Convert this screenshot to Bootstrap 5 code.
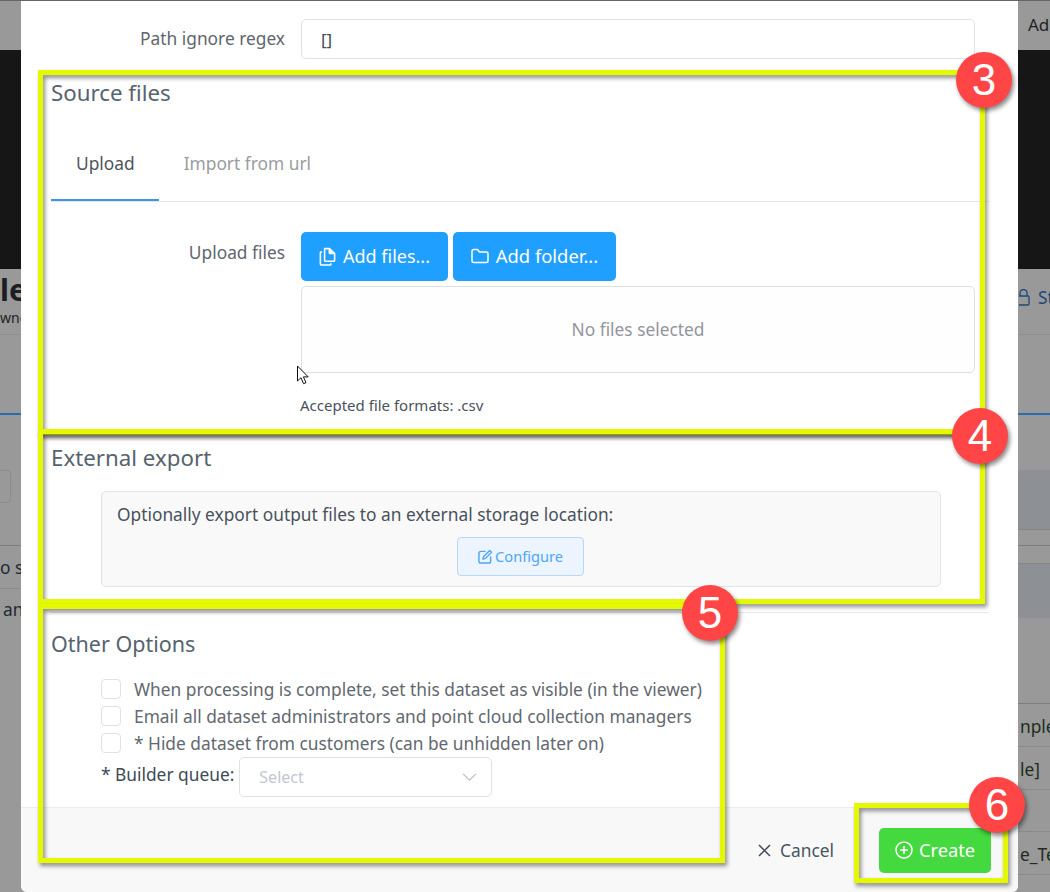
<!doctype html>
<html lang="en">
<head>
<meta charset="utf-8">
<title>Create dataset</title>
<link href="https://cdn.jsdelivr.net/npm/bootstrap@5.3.0/dist/css/bootstrap.min.css" rel="stylesheet">
<style>
html,body{height:892px;overflow:hidden}
body{font-family:"Noto Sans","Open Sans",sans-serif;font-size:17.33px;background:#999;color:#212a33;position:relative}
.pg{height:892px;display:flex;flex-direction:column;border-top:1px solid #666;background:#999;white-space:nowrap;overflow:hidden}
.pg-row{display:flex;justify-content:space-between;align-items:center;flex:none}
.pg-nav{height:49px}
.pg-hero{height:219px;background:#161616}
.pg-title{height:66px;border-bottom:1px solid #8f8f8f;align-items:flex-start}
.pg-tabs{height:80px;border-bottom:2px solid #2a6cb0}
.pg-a{height:55px}
.pg-b{height:76px;border-bottom:1px solid #7d7d7d}
.pg-c{height:43px;border-bottom:1px solid #8a8a8a}
.pg-d{height:43px}
.frag-l{width:21px;overflow:hidden;flex:none}
.frag-r{width:31px;overflow:hidden;flex:none;color:#1f2b1f}
.frag-top{padding-left:9px;color:#222;font-size:17px;margin-top:-2px}
.frag-bold{font-size:30px;font-weight:700;line-height:36px;margin-top:3px;color:#1b1f24;padding-right:2px}
.frag-small{font-size:14px;line-height:17px;display:block;color:#222;margin-top:1px}
.frag-see{font-size:17.33px;margin-top:2px}
.frag-an{font-size:17.33px;padding-left:3px;margin-top:-2px}
.tbl-r{position:absolute;right:0;width:32px;top:470px}
.tr-a{height:60px;background:#8d9196;border-bottom:1px solid #858585}
.tr-b{height:34px;border-bottom:1px solid #858585}
.tr-c{height:54px;background:#8d9196}
.tr-d{height:86px;border-bottom:1px solid #7d7d7d}
.tr-e{height:43px;border-bottom:1px solid #8a8a8a;font-size:17.33px;line-height:44px;color:#1d2e1d;padding-left:2px;overflow:hidden;white-space:nowrap}
.tr-f{height:42px;border-bottom:1px solid #8a8a8a}
.side-box{position:absolute;left:-6px;width:17px;top:470px;height:33px;border:1px solid #8c8c8c;border-radius:4px}

.dlg.modal-content{position:absolute;left:21px;top:1px;width:997px;height:891px;border:0;border-radius:0 0 6px 6px;background:#fff;color:#5a6169;display:flex;flex-direction:column;overflow:hidden}
.dlg-body{padding:18px 29px 0 30px;flex:1 1 auto}
.field{display:flex;gap:16px}
.field-label{width:234px;flex:none;text-align:right;color:#5f666d;font-size:17.33px;line-height:38px}
.field-main{width:674px;flex:none}
.dlg .form-control{height:40px;border:1px solid #dfe1e8;border-radius:5px;padding:0 19px;font-size:17px;color:#444c55;font-family:"Noto Sans",sans-serif}
.sect{font-size:22.300px;line-height:28px;font-weight:400;color:#56636f;margin:0}
.sect-1{margin-top:20px}
.tabs{margin-top:19px;height:76px;border-bottom:1px solid #e6e8ea;flex-wrap:nowrap}
.tabs .nav-link{height:76px;padding:0 25px;line-height:74px;font-size:17.33px;color:#999ca1;border-bottom:2px solid transparent}
.tabs .nav-link.active{color:#4d545b;border-bottom-color:#3e93ea;margin-bottom:-1px;height:75px;line-height:74px;padding-right:24px}
.up-row{margin-top:30px}
.up-row .field-label{line-height:40px}
.add-row{display:flex;gap:5px}
.btn-add{background:#1f9fff;color:#fff;border:0;border-radius:5px;height:49px;font-size:18px;padding:0;width:147px;display:inline-flex;align-items:center;justify-content:center;gap:7px;--bs-btn-hover-bg:#1f9fff;--bs-btn-hover-color:#fff}
.btn-add-wide{width:163px;font-size:18.400px;padding-bottom:2px}
.dropbox{margin-top:5px;height:87px;border:1px solid #dedfe1;border-radius:5px;background:#fefefe;display:flex;align-items:center;justify-content:center;color:#93959e;font-size:17.33px}
.formats{margin-top:22px;margin-left:-1px;font-size:15px;line-height:20px;color:#49525b}
.sect-2{margin-top:29px}
.panel-x{margin:19px 0 0 50px;width:840px;height:96px;background:#f9f9f9;border:1px solid #e3e3e3;border-radius:5px;padding:8px 15px 0;color:#48525c;font-size:17.33px;line-height:28px}
.btn-conf{display:flex;align-items:center;gap:2px;margin:9px 0 0 340px;width:127px;height:39px;padding:0;justify-content:center;background:#ebf4ff;border:1px solid #b6d8fb;border-radius:4px;color:#4ea5f8;font-size:14.600px;--bs-btn-hover-bg:#ebf4ff;--bs-btn-hover-color:#4ea5f8;--bs-btn-hover-border-color:#b6d8fb}
.dlg-hr{margin:25px 0 0;border:0;border-top:1px solid #e6e8ea;opacity:1;height:0}
.sect-3{margin-top:17px;font-size:21.500px}
.opts{margin:17px 0 0 50px}
.opt{display:flex;align-items:center;gap:13px;height:27px;padding-top:2px;font-size:17.33px;color:#62686f;white-space:nowrap}
.opt .form-check-input{width:20px;height:20px;margin:-2px 0 0;border:1px solid #dfe1e8;border-radius:4px;flex:none}
.queue{display:flex;align-items:center;gap:5px;margin-top:-3px;color:#3f4a56;font-size:17.33px;white-space:nowrap}
.queue .form-select{width:253px;height:40px;border:1px solid #dfe1e8;border-radius:5px;color:#c2c6cf;font-size:16px;padding:0 19px;margin-top:4px;background-size:17px 12px;background-position:right 13px center;background-image:url("data:image/svg+xml,%3csvg xmlns='http://www.w3.org/2000/svg' viewBox='0 0 16 10'%3e%3cpath fill='none' stroke='%23b8bcc4' stroke-width='1' d='M2 2l6 6 6-6'/%3e%3c/svg%3e")}
.dlg-foot.modal-footer{height:85px;padding:0 27px 0 0;flex:none;background:#f8f8f8;border-top:1px solid #eceded;border-radius:0;display:flex;justify-content:flex-end;align-items:center;gap:0;flex-wrap:nowrap}
.btn-cancel{background:transparent;border:0;padding:1px 0 0;margin:0 45px 0 0;font-size:17.33px;color:#4a5661;display:flex;align-items:center;gap:9px}
.btn-create{background:#44d93e;color:#fff;border:0;border-radius:5px;width:112px;height:45px;margin:0;padding:0;font-size:18.300px;display:flex;align-items:center;justify-content:center;gap:6px;--bs-btn-hover-bg:#44d93e;--bs-btn-hover-color:#fff}

.mark-box{position:absolute;border:5px solid #e4f800;filter:drop-shadow(2px 3px 2px rgba(0,0,0,.45));pointer-events:none}
.mb3{left:38px;top:70px;width:947px;height:365px}
.mb4{left:38px;top:429px;width:947px;height:175px}
.mb5{left:38px;top:604px;width:687px;height:259px}
.mb6{left:854px;top:803px;width:154px;height:80px}
.num{position:absolute;width:56px;height:56px;border-radius:50%;background:#ff4545;color:#fff;display:flex;align-items:center;justify-content:center;font-family:"Liberation Sans",Arial,sans-serif;font-size:44px;line-height:1;box-shadow:2px 3px 4px rgba(0,0,0,.45)}
.n3{left:956px;top:52px}
.n4{left:952px;top:408px}
.n5{left:682px;top:585px}
.n6{left:969px;top:777px}
.cursor-mark{position:absolute;left:296px;top:365px}
</style>
</head>
<body>
<div class="pg">
  <div class="pg-row pg-nav"><span></span><span class="frag-r frag-top">Ad</span></div>
  <div class="pg-hero"></div>
  <div class="pg-row pg-title">
    <div class="frag-l"><span class="frag-bold d-block text-end">le</span><span class="frag-small">wner</span></div>
    <div class="frag-r d-flex align-items-center gap-2 mt-3" style="color:#1b4a78">
      <svg width="13" height="17" viewBox="0 0 13 17" fill="none" stroke="#1b4a78" stroke-width="1.300" class="flex-shrink-0" style="margin-left:-2px"><path d="M3 7V4a3.500 3.500 0 0 1 7 0v3"/><rect x="1" y="7" width="11" height="9" rx="1"/></svg><span>St</span>
    </div>
  </div>
  <div class="pg-row pg-tabs"></div>
  <div class="pg-row pg-a"></div>
  <div class="pg-row pg-b"></div>
  <div class="pg-row pg-c"><span class="frag-l text-end frag-see">o se</span></div>
  <div class="pg-row pg-d"><span class="frag-l frag-an">an</span></div>
</div>
<div class="side-box"></div>
<div class="tbl-r">
  <div class="tr-a"></div><div class="tr-b"></div><div class="tr-c"></div><div class="tr-d"></div>
  <div class="tr-e">nple</div><div class="tr-e">le]</div><div class="tr-f"></div><div class="tr-e">e_Te</div>
</div>

<div class="modal-content dlg">
  <div class="dlg-body">
    <div class="field">
      <label class="field-label" for="pir">Path ignore regex</label>
      <div class="field-main"><input id="pir" class="form-control" value="[]"></div>
    </div>

    <h5 class="sect sect-1">Source files</h5>
    <ul class="nav tabs">
      <li class="nav-item"><a class="nav-link active" href="#">Upload</a></li>
      <li class="nav-item"><a class="nav-link" href="#">Import from url</a></li>
    </ul>
    <div class="field up-row">
      <div class="field-label">Upload files</div>
      <div class="field-main">
        <div class="add-row">
          <button type="button" class="btn btn-add">
            <svg width="17" height="19" viewBox="1 0 15.500 18" fill="none" stroke="#fff" stroke-width="1.500" stroke-linejoin="round"><path d="M6 1.500h4.500L15.500 6v6.500a1 1 0 0 1-1 1H7a1 1 0 0 1-1-1z"/><path d="M10.500 1.500V6h5" fill="#fff"/><path d="M3.500 4.500h-.5a1 1 0 0 0-1 1V16a1 1 0 0 0 1 1h8a1 1 0 0 0 1-1v-.5"/></svg>
            Add files...
          </button>
          <button type="button" class="btn btn-add btn-add-wide">
            <svg width="18" height="16" viewBox="0 0 18 16" fill="none" stroke="#fff" stroke-width="1.500" stroke-linejoin="round"><path d="M1 3a1.500 1.500 0 0 1 1.500-1.500h4L8.500 4h7A1.500 1.500 0 0 1 17 5.500V13a1.500 1.500 0 0 1-1.500 1.500h-13A1.500 1.500 0 0 1 1 13z"/></svg>
            Add folder...
          </button>
        </div>
        <div class="dropbox">No files selected</div>
        <div class="formats">Accepted file formats: .csv</div>
      </div>
    </div>

    <h5 class="sect sect-2">External export</h5>
    <div class="panel-x">
      <div>Optionally export output files to an external storage location:</div>
      <button type="button" class="btn btn-conf">
        <svg width="15" height="15" viewBox="0 0 16 16" fill="none" stroke="#4ea5f8" stroke-width="1.500" stroke-linejoin="round" stroke-linecap="round"><path d="M7.500 2.500H3A2 2 0 0 0 1 4.500V13a2 2 0 0 0 2 2h8.500a2 2 0 0 0 2-2V8.500"/><path d="M12.500 1.500l2 2L8 10l-2.800.8L6 8z"/></svg>
        Configure
      </button>
    </div>
    <hr class="dlg-hr">

    <h5 class="sect sect-3">Other Options</h5>
    <div class="opts">
      <label class="opt"><input class="form-check-input" type="checkbox">When processing is complete, set this dataset as visible (in the viewer)</label>
      <label class="opt"><input class="form-check-input" type="checkbox">Email all dataset administrators and point cloud collection managers</label>
      <label class="opt"><input class="form-check-input" type="checkbox">* Hide dataset from customers (can be unhidden later on)</label>
      <div class="queue"><span>* Builder queue:</span>
        <select class="form-select" aria-label="Builder queue"><option>Select</option></select>
      </div>
    </div>
  </div>
  <div class="modal-footer dlg-foot">
    <button type="button" class="btn btn-cancel">
      <svg width="13" height="13" viewBox="0 0 13 13" stroke="#3f4a56" stroke-width="1.500" fill="none"><path d="M1 1l11 11M12 1L1 12"/></svg>
      Cancel
    </button>
    <button type="button" class="btn btn-create">
      <svg width="18" height="18" viewBox="0 0 18 18" fill="none" stroke="#fff" stroke-width="1.500"><circle cx="9" cy="9" r="8"/><path d="M9 5v8M5 9h8"/></svg>
      Create
    </button>
  </div>
</div>

<div class="mark-box mb3"></div>
<div class="mark-box mb4"></div>
<div class="mark-box mb5"></div>
<div class="mark-box mb6"></div>
<div class="num n3">3</div>
<div class="num n4">4</div>
<div class="num n5">5</div>
<div class="num n6">6</div>
<svg class="cursor-mark" width="14" height="21" viewBox="0 0 14 21"><path d="M1.500 1v15l3.500-3.300 2.500 6 2.500-1-2.600-5.800h4.800z" fill="#fff" stroke="#111" stroke-width="1"/></svg>
<script src="https://cdn.jsdelivr.net/npm/bootstrap@5.3.0/dist/js/bootstrap.bundle.min.js"></script>
</body>
</html>
